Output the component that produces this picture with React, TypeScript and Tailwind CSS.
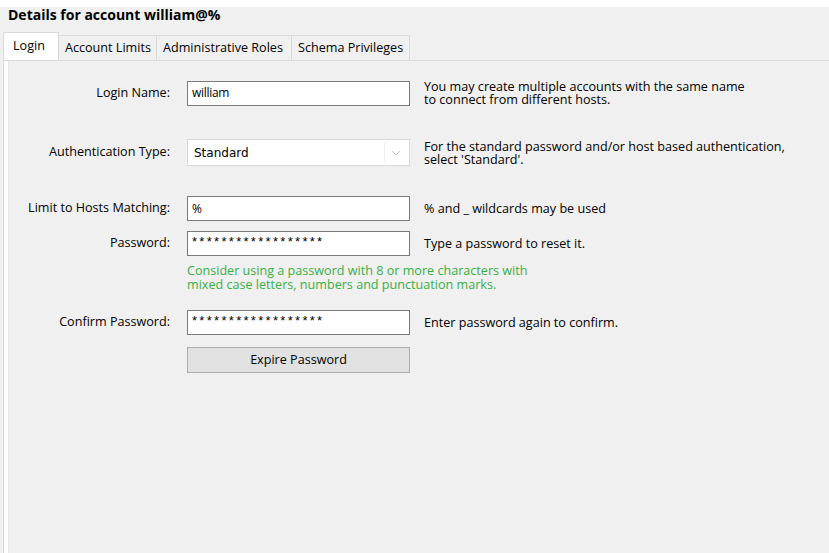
import React from "react";

const font = { fontFamily: '"Open Sans", "Noto Sans", Arial, sans-serif' };

function Row({
  label,
  children,
  hint,
  className = "",
}: {
  label: string;
  children: React.ReactNode;
  hint?: React.ReactNode;
  className?: string;
}) {
  return (
    <div className={`flex items-center ${className}`}>
      <div className="w-[162px] shrink-0 pr-[1px] text-right text-[12.6px] text-[#000]">{label}</div>
      <div className="ml-[16px] w-[223px] shrink-0">{children}</div>
      {hint && <div className="ml-[14px] text-[12.6px] leading-[13px] text-[#000]">{hint}</div>}
    </div>
  );
}

function TextBox({ value, mono = false }: { value: string; mono?: boolean }) {
  return (
    <div className="flex h-[25px] items-center border border-[#7a7a7a] bg-white pl-[4px]">
      <span
        className={mono ? "pb-[3px] text-[13px] tracking-[2.3px]" : "text-[12px] tracking-[-0.3px]"}
        style={mono ? { fontFamily: '"Liberation Sans", Arial, sans-serif' } : undefined}
      >
        {value}
      </span>
    </div>
  );
}

export default function App() {
  const tabs = ["Account Limits", "Administrative Roles", "Schema Privileges"];
  return (
    <div className="h-[553px] w-[829px] overflow-hidden bg-white" style={font}>
      <div className="mt-[7px] flex h-[546px] flex-col bg-[#f0f0f0]">
        <div className="pl-[8px] text-[14px] font-bold leading-[16px] text-[#000]">
          Details for account william@%
        </div>

        {/* tabs */}
        <div className="mt-[10px] flex h-[27px] items-end pl-[3px]">
          <div className="relative z-10 flex h-[28px] w-[56px] items-start border-x border-t border-[#d9d9d9] bg-white pl-[9px] pt-[4px] text-[12.6px]">
            Login
          </div>
          {tabs.map((t, i) => (
            <div
              key={t}
              className={`flex h-[25px] items-center whitespace-nowrap border-t border-r border-[#d9d9d9] bg-[#f0f0f0] px-[6px] text-[12.6px] ${
                i === 0 ? "w-[98px]" : i === 1 ? "w-[135px]" : "w-[118px]"
              }`}
            >
              {t}
            </div>
          ))}
        </div>

        {/* tab page */}
        <div className="ml-[3px] flex flex-1 border-l border-t border-[#d9d9d9] bg-white pl-[4px]">
          <div className="flex-1 border-l border-[#e8e8e8] bg-[#f0f0f0] pt-[19px]">
            <Row
              label="Login Name:"
              hint={
                <>
                  You may create multiple accounts with the same name
                  <br />
                  to connect from different hosts.
                </>
              }
            >
              <TextBox value="william" />
            </Row>

            <Row
              className="mt-[33px]"
              label="Authentication Type:"
              hint={
                <>
                  For the standard password and/or host based authentication,
                  <br />
                  select 'Standard'.
                </>
              }
            >
              <div className="flex h-[27px] items-center border border-[#d9d9d9] bg-white p-[2px]">
                <div
                  className="flex h-full flex-1 items-center border-r border-[#f0f0f0] pl-[4px]"
                  style={{ fontFamily: '"DejaVu Sans", sans-serif', fontSize: 12 }}
                >
                  Standard
                </div>
                <div className="flex w-[22px] items-center justify-center">
                  <svg width="10" height="6" viewBox="0 0 10 6">
                    <path d="M1 1 L5 5 L9 1" fill="none" stroke="#c4c4c4" strokeWidth="1" />
                  </svg>
                </div>
              </div>
            </Row>

            <Row className="mt-[30px]" label="Limit to Hosts Matching:" hint="% and _ wildcards may be used">
              <TextBox value="%" />
            </Row>

            <Row className="mt-[10px]" label="Password:" hint="Type a password to reset it.">
              <TextBox value="******************" mono />
            </Row>

            <div className="ml-[178px] mt-[8px] text-[12.6px] leading-[14px] text-[#3aae46]">
              Consider using a password with 8 or more characters with
              <br />
              mixed case letters, numbers and punctuation marks.
            </div>

            <Row className="mt-[18px]" label="Confirm Password:" hint="Enter password again to confirm.">
              <TextBox value="******************" mono />
            </Row>

            <div className="ml-[178px] mt-[12px] flex h-[26px] w-[223px] items-center justify-center border border-[#adadad] bg-[#e1e1e1] text-[12.6px]">
              Expire Password
            </div>
          </div>
        </div>
      </div>
    </div>
  );
}
